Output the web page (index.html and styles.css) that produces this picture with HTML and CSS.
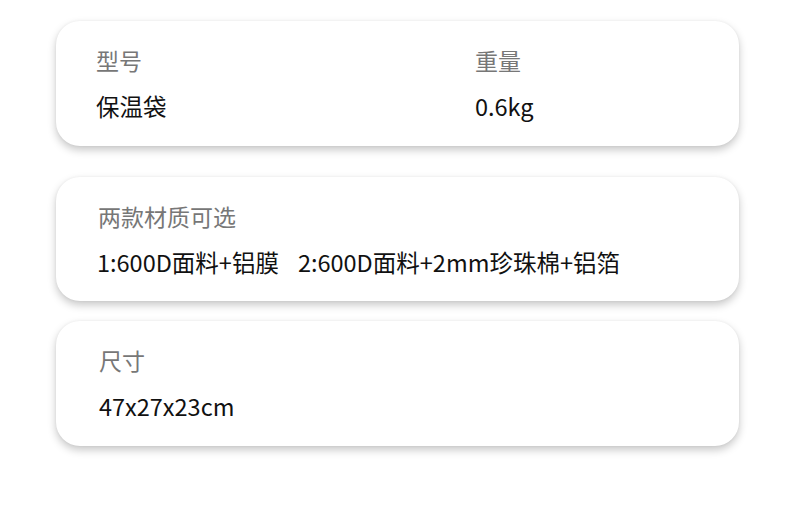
FILE: index.html
```html
<!DOCTYPE html>
<html lang="zh">
<head>
<meta charset="utf-8">
<link rel="stylesheet" href="styles.css">
</head>
<body>
<div class="page">
  <section class="card card-1">
    <div class="grid">
      <div class="field">
        <div class="label">型号</div>
        <div class="value">保温袋</div>
      </div>
      <div class="field">
        <div class="label">重量</div>
        <div class="value">0.6kg</div>
      </div>
    </div>
  </section>
  <section class="card card-2">
    <div class="field">
      <div class="label">两款材质可选</div>
      <div class="value"><span>1:600D面料+铝膜</span><span class="option">2:600D面料+2mm珍珠棉+铝箔</span></div>
    </div>
  </section>
  <section class="card card-3">
    <div class="field">
      <div class="label">尺寸</div>
      <div class="value">47x27x23cm</div>
    </div>
  </section>
</div>
</body>
</html>
```
FILE: styles.css
```css
html, body {
  margin: 0;
  padding: 0;
  background: #ffffff;
}
body {
  font-family: "Noto Sans CJK SC", "Noto Sans", sans-serif;
  width: 790px;
  height: 505px;
  overflow: hidden;
}
.page {
  padding: 21px 51px 0 56px;
  display: flex;
  flex-direction: column;
}
.card {
  background: #fff;
  border-radius: 24px;
  box-shadow: 0 4px 8px rgba(0, 0, 0, 0.22), 0 0 3px rgba(0, 0, 0, 0.05);
  padding: 26px 40px 26px 40px;
  box-sizing: border-box;
  height: 125px;
}
.card-2 {
  margin-top: 31px;
  height: 124px;
  padding-left: 41px;
}
.card-3 {
  margin-top: 20px;
  padding-left: 43px;
}
.grid {
  display: grid;
  grid-template-columns: 379px 1fr;
}
.label {
  font-size: 23px;
  line-height: 26px;
  color: #777777;
}
.card-2 .label {
  margin-left: 1px;
}
.value {
  margin-top: 20px;
  font-size: 23.5px;
  line-height: 26px;
  color: #111111;
  white-space: nowrap;
}
.option {
  margin-left: 19px;
}
```
